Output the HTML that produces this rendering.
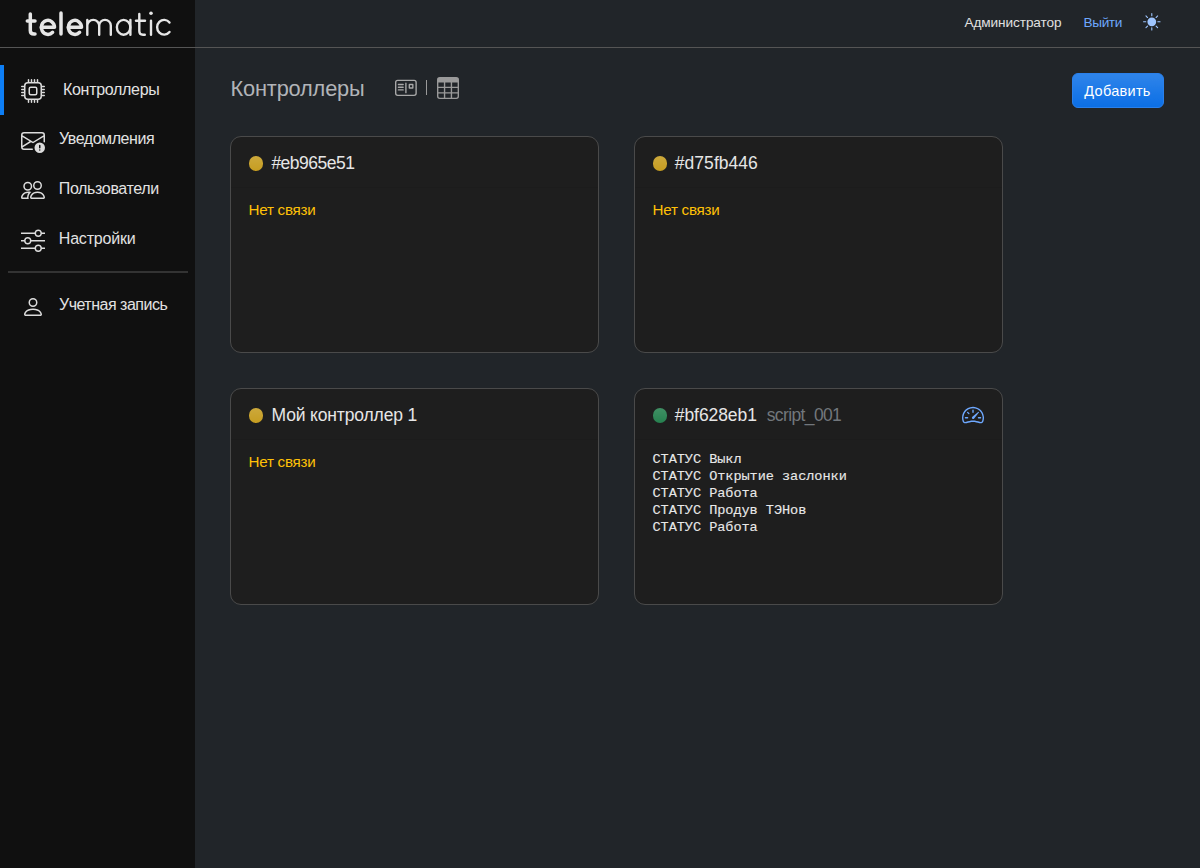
<!DOCTYPE html>
<html lang="ru">
<head>
<meta charset="utf-8">
<title>telematic</title>
<style>
html,body{margin:0;padding:0;}
body{width:1200px;height:868px;overflow:hidden;background:#212529;font-family:"Liberation Sans",sans-serif;position:relative;}
.a{position:absolute;}
.t{position:absolute;white-space:pre;line-height:1;}
.card{position:absolute;width:367px;height:215px;border:1px solid #4a4a4a;border-radius:11px;background:#1e1e1e;}
.dot{position:absolute;width:14.5px;height:14.5px;border-radius:50%;background-image:linear-gradient(180deg,rgba(255,255,255,.12),rgba(255,255,255,0));}
</style>
</head>
<body>
<div class="a" style="left:0;top:0;width:195px;height:868px;background:#101010"></div>
<div class="a" style="left:0;top:47px;width:1200px;height:1px;background:#555555"></div>
<svg class="a" style="left:0;top:0" width="195" height="47" viewBox="0 0 195 47" fill="none" stroke="#e6e6e6" stroke-linecap="round" stroke-linejoin="round">
<g stroke-width="3.5">
<path d="M30.3 14 V30.5 Q30.3 34 34 34 H35"/>
<path d="M27.3 21 H35"/>
<path d="M41.1 27.3 H54.5 A6.6 7 0 1 0 52.6 32.3"/>
<path d="M61 13 V34"/>
<path d="M68.1 27.3 H81.5 A6.6 7 0 1 0 79.6 32.3"/>
</g>
<g stroke-width="2.4">
<path d="M87.3 34.7 V19.9 M87.3 25.5 A5.95 5.65 0 0 1 99.2 25.5 V34.7 M99.2 25.5 A5.8 5.65 0 0 1 110.8 25.5 V34.7"/>
<ellipse cx="123.6" cy="27.3" rx="6.7" ry="7.4"/>
<path d="M130.4 19.9 V34.7"/>
<path d="M139.3 14 V31 Q139.3 34.7 143 34.7 H144.8"/>
<path d="M136 20.8 H145"/>
<path d="M151 20.7 V34.7"/>
<path d="M169.5 22.5 A7 7.4 0 1 0 169.5 32"/>
</g>
<circle cx="151" cy="13.3" r="1.8" fill="#e6e6e6" stroke="none"/>
</svg>
<span class="t" style="left:964.5px;top:16.0px;font-size:13.6px;letter-spacing:-0.083px;color:#e0e0e0;font-family:'Liberation Sans';">Администратор</span>
<span class="t" style="left:1083.55px;top:16.0px;font-size:13.6px;letter-spacing:-0.375px;color:#6ea8fe;font-family:'Liberation Sans';">Выйти</span>
<svg class="a" style="left:1143px;top:13px" width="17.6" height="17.6" viewBox="0 0 16 16" fill="#9ec5fe"><path d="M8 12a4 4 0 1 0 0-8 4 4 0 0 0 0 8M8 0a.5.5 0 0 1 .5.5v2a.5.5 0 0 1-1 0v-2A.5.5 0 0 1 8 0m0 13a.5.5 0 0 1 .5.5v2a.5.5 0 0 1-1 0v-2A.5.5 0 0 1 8 13m8-5a.5.5 0 0 1-.5.5h-2a.5.5 0 0 1 0-1h2a.5.5 0 0 1 .5.5M3 8a.5.5 0 0 1-.5.5h-2a.5.5 0 0 1 0-1h2A.5.5 0 0 1 3 8m10.657-5.657a.5.5 0 0 1 0 .707l-1.414 1.415a.5.5 0 1 1-.707-.708l1.414-1.414a.5.5 0 0 1 .707 0m-9.193 9.193a.5.5 0 0 1 0 .707L3.050 13.657a.5.5 0 0 1-.707-.707l1.414-1.414a.5.5 0 0 1 .707 0m9.193 2.121a.5.5 0 0 1-.707 0l-1.414-1.414a.5.5 0 0 1 .707-.707l1.414 1.414a.5.5 0 0 1 0 .707M4.464 4.465a.5.5 0 0 1-.707 0L2.343 3.050a.5.5 0 1 1 .707-.707l1.414 1.414a.5.5 0 0 1 0 .708"/></svg>
<div class="a" style="left:0;top:65px;width:4px;height:50px;background:#0d7ef5"></div>
<svg class="a" style="left:20.5px;top:79px" width="24" height="24" viewBox="0 0 16 16" fill="#dcdcdc"><path d="M5 0a.5.5 0 0 1 .5.5V2h1V.5a.5.5 0 0 1 1 0V2h1V.5a.5.5 0 0 1 1 0V2h1V.5a.5.5 0 0 1 1 0V2A2.5 2.5 0 0 1 14 4.5h1.5a.5.5 0 0 1 0 1H14v1h1.5a.5.5 0 0 1 0 1H14v1h1.5a.5.5 0 0 1 0 1H14v1h1.5a.5.5 0 0 1 0 1H14a2.5 2.5 0 0 1-2.5 2.5v1.5a.5.5 0 0 1-1 0V14h-1v1.5a.5.5 0 0 1-1 0V14h-1v1.5a.5.5 0 0 1-1 0V14h-1v1.5a.5.5 0 0 1-1 0V14A2.5 2.5 0 0 1 2 11.5H.5a.5.5 0 0 1 0-1H2v-1H.5a.5.5 0 0 1 0-1H2v-1H.5a.5.5 0 0 1 0-1H2v-1H.5a.5.5 0 0 1 0-1H2A2.5 2.5 0 0 1 4.5 2V.5A.5.5 0 0 1 5 0m-.5 3A1.5 1.5 0 0 0 3 4.5v7A1.5 1.5 0 0 0 4.5 13h7a1.5 1.5 0 0 0 1.5-1.5v-7A1.5 1.5 0 0 0 11.5 3zM5 6.5A1.5 1.5 0 0 1 6.5 5h3A1.5 1.5 0 0 1 11 6.5v3A1.5 1.5 0 0 1 9.5 11h-3A1.5 1.5 0 0 1 5 9.5zM6.5 6a.5.5 0 0 0-.5.5v3a.5.5 0 0 0 .5.5h3a.5.5 0 0 0 .5-.5v-3a.5.5 0 0 0-.5-.5z"/></svg>
<span class="t" style="left:63.0px;top:81.5px;font-size:16.0px;letter-spacing:-0.3px;color:#e2e2e2;font-family:'Liberation Sans';">Контроллеры</span>
<svg class="a" style="left:20.5px;top:128.5px" width="24" height="24" viewBox="0 0 16 16" fill="#dcdcdc"><path d="M2 2a2 2 0 0 0-2 2v8.01A2 2 0 0 0 2 14h5.5a.5.5 0 0 0 0-1H2a1 1 0 0 1-.966-.741l5.64-3.471L8 9.583l7-4.2V8.5a.5.5 0 0 0 1 0V4a2 2 0 0 0-2-2zm3.708 6.208L1 11.105V5.383zM1 4.217V4a1 1 0 0 1 1-1h12a1 1 0 0 1 1 1v.217l-7 4.2z"/><path d="M12.5 16a3.5 3.5 0 1 0 0-7 3.5 3.5 0 0 0 0 7m.5-5v1.5a.5.5 0 0 1-1 0V11a.5.5 0 0 1 1 0m0 3a.5.5 0 1 1-1 0 .5.5 0 0 1 1 0"/></svg>
<span class="t" style="left:59.0px;top:131.0px;font-size:16.0px;letter-spacing:-0.45px;color:#e2e2e2;font-family:'Liberation Sans';">Уведомления</span>
<svg class="a" style="left:20.5px;top:178px" width="24" height="24" viewBox="0 0 16 16" fill="#dcdcdc"><path d="M15 14s1 0 1-1-1-4-5-4-5 3-5 4 1 1 1 1zm-7.978-1L7 12.996c.001-.264.167-1.03.76-1.72C8.312 10.629 9.282 10 11 10c1.717 0 2.687.63 3.24 1.276.593.69.758 1.457.76 1.72l-.008.002-.014.002zM11 7a2 2 0 1 0 0-4 2 2 0 0 0 0 4m3-2a3 3 0 1 1-6 0 3 3 0 0 1 6 0M6.936 9.28a6 6 0 0 0-1.23-.247A7 7 0 0 0 5 9c-4 0-5 3-5 4q0 1 1 1h4.216A2.24 2.24 0 0 1 5 13c0-1.010.377-2.042 1.09-2.904.243-.294.526-.569.846-.816M4.92 10A5.5 5.5 0 0 0 4 13H1c0-.26.164-1.03.76-1.724.545-.636 1.492-1.256 3.16-1.275ZM1.5 5.5a3 3 0 1 1 6 0 3 3 0 0 1-6 0m3-2a2 2 0 1 0 0 4 2 2 0 0 0 0-4"/></svg>
<span class="t" style="left:58.8px;top:181.0px;font-size:16.0px;letter-spacing:-0.364px;color:#e2e2e2;font-family:'Liberation Sans';">Пользователи</span>
<svg class="a" style="left:20.5px;top:228px" width="24" height="24" viewBox="0 0 16 16" fill="#dcdcdc"><path fill-rule="evenodd" d="M11.5 2a1.5 1.5 0 1 0 0 3 1.5 1.5 0 0 0 0-3M9.05 3a2.5 2.5 0 0 1 4.9 0H16v1h-2.05a2.5 2.5 0 0 1-4.9 0H0V3zM4.5 7a1.5 1.5 0 1 0 0 3 1.5 1.5 0 0 0 0-3M2.05 8a2.5 2.5 0 0 1 4.9 0H16v1H6.95a2.5 2.5 0 0 1-4.9 0H0V8zm9.45 4a1.5 1.5 0 1 0 0 3 1.5 1.5 0 0 0 0-3m-2.45 1a2.5 2.5 0 0 1 4.9 0H16v1h-2.05a2.5 2.5 0 0 1-4.9 0H0v-1z"/></svg>
<span class="t" style="left:58.8px;top:231.0px;font-size:16.0px;letter-spacing:-0.2px;color:#e2e2e2;font-family:'Liberation Sans';">Настройки</span>
<svg class="a" style="left:20.5px;top:294.5px" width="24" height="24" viewBox="0 0 16 16" fill="#dcdcdc"><path d="M8 8a3 3 0 1 0 0-6 3 3 0 0 0 0 6m2-3a2 2 0 1 1-4 0 2 2 0 0 1 4 0m4 8c0 1-1 1-1 1H3s-1 0-1-1 1-4 6-4 6 3 6 4m-1-.004c-.001-.246-.154-.986-.832-1.664C11.516 10.68 10.289 10 8 10s-3.516.68-4.168 1.332c-.678.678-.83 1.418-.832 1.664z"/></svg>
<span class="t" style="left:59.0px;top:297.0px;font-size:16.0px;letter-spacing:-0.5px;color:#e2e2e2;font-family:'Liberation Sans';">Учетная запись</span>
<div class="a" style="left:8px;top:271px;width:180px;height:2px;background:#333333"></div>
<span class="t" style="left:230.5px;top:77.6px;font-size:21.8px;letter-spacing:-0.175px;color:#b1b4b8;font-family:'Liberation Sans';">Контроллеры</span>
<svg class="a" style="left:395px;top:77.3px" width="21.8" height="21.8" viewBox="0 0 16 16" fill="#a8a8a8"><path fill-rule="evenodd" d="M2 2a2 2 0 0 0-2 2v8a2 2 0 0 0 2 2h12a2 2 0 0 0 2-2V4a2 2 0 0 0-2-2zM1 4a1 1 0 0 1 1-1h12a1 1 0 0 1 1 1v8a1 1 0 0 1-1 1H2a1 1 0 0 1-1-1zm7.5.5a.5.5 0 0 0-1 0v7a.5.5 0 0 0 1 0zM2 5.5a.5.5 0 0 1 .5-.5H6a.5.5 0 0 1 0 1H2.5a.5.5 0 0 1-.5-.5m0 2a.5.5 0 0 1 .5-.5H6a.5.5 0 0 1 0 1H2.5a.5.5 0 0 1-.5-.5m0 2a.5.5 0 0 1 .5-.5H6a.5.5 0 0 1 0 1H2.5a.5.5 0 0 1-.5-.5M10.6 5a.6.6 0 0 0-.6.6v2.4a.6.6 0 0 0 .6.6h2.4a.6.6 0 0 0 .6-.6V5.6a.6.6 0 0 0-.6-.6zM11 6h1.6v1.6H11z"/></svg>
<div class="a" style="left:426.2px;top:80px;width:1px;height:15px;background:#9a9a9a"></div>
<svg class="a" style="left:437px;top:77px" width="22" height="22" viewBox="0 0 16 16" fill="#9a9a9a"><path d="M0 2a2 2 0 0 1 2-2h12a2 2 0 0 1 2 2v12a2 2 0 0 1-2 2H2a2 2 0 0 1-2-2zm15 2h-4v3h4zm0 4h-4v3h4zm0 4h-4v3h3a1 1 0 0 0 1-1zm-5 3v-3H6v3zm-5 0v-3H1v2a1 1 0 0 0 1 1zm-4-4h4V8H1zm0-4h4V4H1zm5-3v3h4V4zm4 4H6v3h4z"/></svg>
<div class="a" style="left:1072px;top:72.8px;width:92px;height:35.6px;border-radius:6px;border:1px solid #2a80ea;box-sizing:border-box;background:#0b6fe6;background-image:linear-gradient(180deg,rgba(255,255,255,.15),rgba(255,255,255,0));"></div>
<span class="t" style="left:1084.3px;top:84.0px;font-size:14.5px;letter-spacing:0.286px;color:#ffffff;font-family:'Liberation Sans';">Добавить</span>
<div class="card" style="left:230px;top:136px"></div>
<div class="a" style="left:231px;top:187px;width:367px;height:1px;background:#1c1c1c"></div>
<div class="dot" style="left:248.5px;top:156px;background-color:#c69d21"></div>
<div class="card" style="left:634px;top:136px"></div>
<div class="a" style="left:635px;top:187px;width:367px;height:1px;background:#1c1c1c"></div>
<div class="dot" style="left:652.5px;top:156px;background-color:#c69d21"></div>
<div class="card" style="left:230px;top:388px"></div>
<div class="a" style="left:231px;top:439px;width:367px;height:1px;background:#1c1c1c"></div>
<div class="dot" style="left:248.5px;top:408px;background-color:#c69d21"></div>
<div class="card" style="left:634px;top:388px"></div>
<div class="a" style="left:635px;top:439px;width:367px;height:1px;background:#1c1c1c"></div>
<div class="dot" style="left:652.5px;top:408px;background-color:#26804f"></div>
<span class="t" style="left:271.4px;top:155.25px;font-size:17.5px;letter-spacing:-0.512px;color:#e6e6e6;font-family:'Liberation Sans';">#eb965e51</span>
<span class="t" style="left:674.8px;top:155.25px;font-size:17.5px;letter-spacing:0.038px;color:#e6e6e6;font-family:'Liberation Sans';">#d75fb446</span>
<span class="t" style="left:271.5px;top:406.6px;font-size:17.5px;letter-spacing:-0.147px;color:#e6e6e6;font-family:'Liberation Sans';">Мой контроллер 1</span>
<span class="t" style="left:674.8px;top:406.6px;font-size:17.5px;letter-spacing:-0.075px;color:#e6e6e6;font-family:'Liberation Sans';">#bf628eb1</span>
<span class="t" style="left:766.7px;top:406.6px;font-size:17.5px;letter-spacing:-0.622px;color:#72777c;font-family:'Liberation Sans';">script_001</span>
<span class="t" style="left:248.60000000000002px;top:201.89999999999998px;font-size:15.2px;letter-spacing:-0.275px;color:#ffc107">Нет связи</span>
<span class="t" style="left:652.6px;top:201.89999999999998px;font-size:15.2px;letter-spacing:-0.275px;color:#ffc107">Нет связи</span>
<span class="t" style="left:248.60000000000002px;top:453.9px;font-size:15.2px;letter-spacing:-0.275px;color:#ffc107">Нет связи</span>
<div class="t" style="left:652.5px;top:450.8px;font-size:13.6px;letter-spacing:-0.065px;color:#e8e8e8;font-family:'Liberation Mono';line-height:17.05px;-webkit-text-stroke:0.12px #e8e8e8">СТАТУС Выкл
СТАТУС Открытие заслонки
СТАТУС Работа
СТАТУС Продув ТЭНов
СТАТУС Работа</div>
<svg class="a" style="left:962px;top:404px" width="22" height="22" viewBox="0 0 16 16" fill="#6ea8fe"><path d="M8 4a.5.5 0 0 1 .5.5V6a.5.5 0 0 1-1 0V4.5A.5.5 0 0 1 8 4M3.732 5.732a.5.5 0 0 1 .707 0l.915.914a.5.5 0 1 1-.708.708l-.914-.915a.5.5 0 0 1 0-.707M2 10a.5.5 0 0 1 .5-.5h1.586a.5.5 0 0 1 0 1H2.5A.5.5 0 0 1 2 10m9.5 0a.5.5 0 0 1 .5-.5h1.5a.5.5 0 0 1 0 1H12a.5.5 0 0 1-.5-.5m.754-4.246a.39.39 0 0 0-.527-.02L7.547 9.31a.91.91 0 1 0 1.302 1.258l3.434-4.297a.39.39 0 0 0-.029-.518z"/><path fill-rule="evenodd" d="M0 10a8 8 0 1 1 15.547 2.661c-.442 1.253-1.845 1.602-2.932 1.25C11.309 13.488 9.475 13 8 13c-1.474 0-3.31.488-4.615.911-1.087.352-2.490.003-2.932-1.25A8 8 0 0 1 0 10m8-7a7 7 0 0 0-6.603 9.329c.203.575.923.876 1.680.630C4.397 12.533 6.358 12 8 12s3.604.532 4.923.96c.757.245 1.477-.056 1.680-.631A7 7 0 0 0 8 3"/></svg>
</body>
</html>
